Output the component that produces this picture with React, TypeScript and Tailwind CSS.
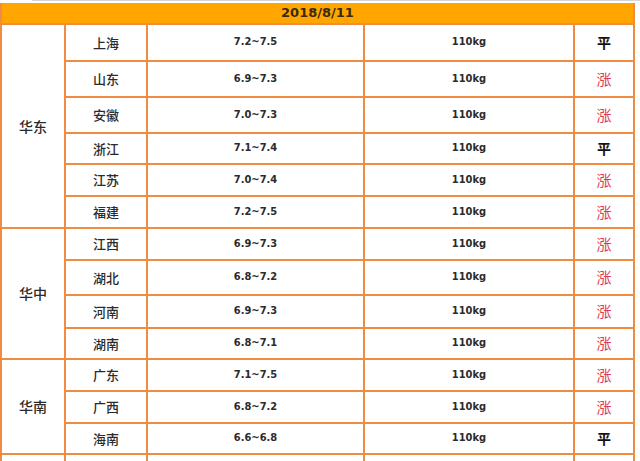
import React from 'react';

type Row = { p: string; price: string; up: boolean; h: string };

const groups: { region: string; span: string; rows: Row[] }[] = [
  {
    region: '华东',
    span: 'row-span-6',
    rows: [
      { p: '上海', price: '7.2~7.5', up: false, h: 'h-[35px]' },
      { p: '山东', price: '6.9~7.3', up: true, h: 'h-[34px]' },
      { p: '安徽', price: '7.0~7.3', up: true, h: 'h-[34px]' },
      { p: '浙江', price: '7.1~7.4', up: false, h: 'h-[29px]' },
      { p: '江苏', price: '7.0~7.4', up: true, h: 'h-[30px]' },
      { p: '福建', price: '7.2~7.5', up: true, h: 'h-[30px]' },
    ],
  },
  {
    region: '华中',
    span: 'row-span-4',
    rows: [
      { p: '江西', price: '6.9~7.3', up: true, h: 'h-[30px]' },
      { p: '湖北', price: '6.8~7.2', up: true, h: 'h-[33px]' },
      { p: '河南', price: '6.9~7.3', up: true, h: 'h-[31px]' },
      { p: '湖南', price: '6.8~7.1', up: true, h: 'h-[29px]' },
    ],
  },
  {
    region: '华南',
    span: 'row-span-3',
    rows: [
      { p: '广东', price: '7.1~7.5', up: true, h: 'h-[30px]' },
      { p: '广西', price: '6.8~7.2', up: true, h: 'h-[30px]' },
      { p: '海南', price: '6.6~6.8', up: false, h: 'h-[29px]' },
    ],
  },
];

const cjk = "font-['Noto_Sans_CJK_SC',sans-serif]";
const num = "font-['DejaVu_Sans_Condensed','DejaVu_Sans',sans-serif] font-bold text-[11px] text-[#2b2b2b]";

export default function App() {
  return (
    <div className="w-[640px] h-[461px] overflow-hidden bg-white">
      {/* thin grey line above the sheet */}
      <div className="h-[3px]">
        <div className="ml-[32px] border-t border-[#d6d6d6]" />
      </div>

      <div className="w-[635px] grid grid-cols-[62px_80px_215px_208px_58px] gap-[2px] px-[2px] pb-[2px] bg-[#EF8C42]">
        <div className="col-span-5 h-[20px] bg-[#FFA600] flex items-center justify-center font-['DejaVu_Sans',sans-serif] font-bold text-[13px] text-[#3a2a10]">
          2018/8/11
        </div>

        {groups.map((g) => (
          <React.Fragment key={g.region}>
            <div className={`${g.span} bg-white flex items-center justify-center ${cjk} text-[14px] font-medium text-[#2b2b2b]`}>
              {g.region}
            </div>
            {g.rows.map((r, i) => (
              <React.Fragment key={r.p}>
                <div className={`${r.h} bg-white flex items-center justify-center ${cjk} text-[13px] font-medium text-[#2b2b2b] ${i === 0 ? 'col-start-2' : ''}`}>
                  {r.p}
                </div>
                <div className={`bg-white flex items-center justify-center ${num}`}>{r.price}</div>
                <div className={`bg-white flex items-center justify-center ${num}`}>110kg</div>
                <div className={`bg-white flex items-center justify-center ${cjk}`}>
                  {r.up ? (
                    <span className="text-[15px] text-[#E03A55]">涨</span>
                  ) : (
                    <span className="text-[14px] font-bold text-[#111]">平</span>
                  )}
                </div>
              </React.Fragment>
            ))}
          </React.Fragment>
        ))}

        {/* next row, cut off by the bottom edge */}
        <div className="h-[30px] bg-white" />
        <div className="bg-white" />
        <div className="bg-white" />
        <div className="bg-white" />
        <div className="bg-white" />
      </div>
    </div>
  );
}
